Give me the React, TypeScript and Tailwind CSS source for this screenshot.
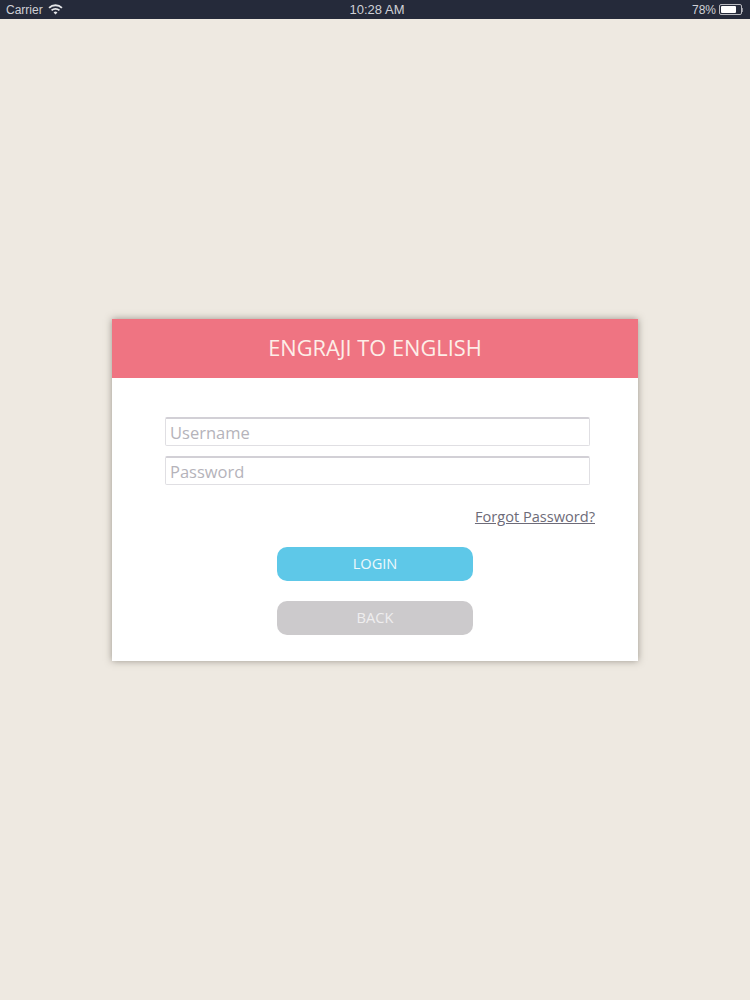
const font = "font-['Open_Sans',sans-serif]";

function StatusBar() {
  return (
    <div className="h-[19px] bg-[#252a3a] grid grid-cols-3 items-center px-[6px] text-[12px] text-[#cfd0d6] font-['Liberation_Sans',sans-serif]">
      <div className="flex items-center gap-[5px]">
        <span>Carrier</span>
        <svg viewBox="0 0 16 12" className="w-[15px] h-[11px] text-[#e4e5e8]" fill="none" stroke="currentColor" strokeWidth="2">
          <path d="M1 4.2a10 10 0 0 1 14 0" />
          <path d="M3.7 7a6.2 6.2 0 0 1 8.6 0" />
          <path d="M8 11.5 5.9 9.2a3 3 0 0 1 4.2 0Z" fill="currentColor" stroke="none" />
        </svg>
      </div>
      <div className="text-center text-[13px] pl-[4px]">10:28 AM</div>
      <div className="flex items-center justify-end gap-[3px] pr-[1px]">
        <span>78%</span>
        <div className="flex items-center">
          <div className="w-[23px] h-[11px] border border-[#b9bac0] rounded-[2px] p-[1px]">
            <div className="h-full w-[78%] bg-white rounded-[1px]" />
          </div>
          <div className="w-[1px] h-[4px] bg-[#8f919a]" />
        </div>
      </div>
    </div>
  );
}

function Field({ placeholder }: { placeholder: string }) {
  return (
    <input
      readOnly
      placeholder={placeholder}
      className="block w-[425px] h-[29px] px-[4px] bg-white border border-[#e0dfe3] border-t-2 border-t-[#d2d0d6] rounded-[2px] text-[16.5px] outline-none placeholder:text-[#b5b3ba]"
    />
  );
}

export default function App() {
  return (
    <div className={`min-h-[1000px] bg-[#eee9e1] ${font}`}>
      <StatusBar />
      <div className="pt-[300px] flex justify-center">
        <div className="w-[526px] h-[342px] bg-white shadow-[0_0_7px_rgba(70,65,55,0.5)]">
          <div className="h-[59px] bg-[#ef7482] flex items-center justify-center text-[21.8px] text-[#fdeee8]">
            ENGRAJI TO ENGLISH
          </div>
          <div className="pt-[39px] pl-[53px] pr-[43px]">
            <div className="flex flex-col gap-[10px]">
              <Field placeholder="Username" />
              <Field placeholder="Password" />
            </div>
            <div className="mt-[21px] text-right text-[14.6px] leading-[20px] text-[#6d6b78] underline">
              Forgot Password?
            </div>
            <div className="mt-[21px] ml-[112px] w-[196px] flex flex-col gap-[20px] text-[14.6px]">
              <button className="h-[34px] pb-[1px] rounded-[10px] bg-[#5ec8e8] text-[#eef9fc]">LOGIN</button>
              <button className="h-[34px] pb-[1px] rounded-[10px] bg-[#cccacc] text-[#efeeef]">BACK</button>
            </div>
          </div>
        </div>
      </div>
    </div>
  );
}
